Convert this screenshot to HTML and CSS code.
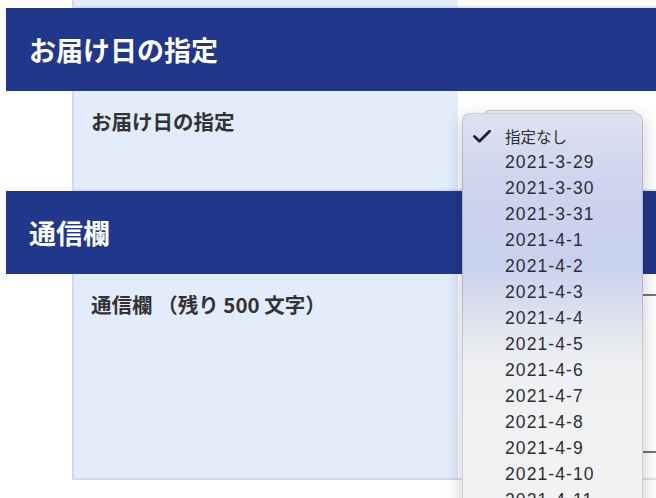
FILE: index.html
```html
<html>
<head>
  <title>お届け日の指定</title>
  <link rel="stylesheet" href="styles.css">
</head>
<body>
  <div class="order-form">
    <div class="form-row prev-row">
      <div class="label-cell"></div>
      <div class="field-cell"></div>
    </div>

    <h2 class="section-head">お届け日の指定</h2>
    <div class="form-row date-row">
      <div class="label-cell">お届け日の指定</div>
      <div class="field-cell">
        <div class="select-box"></div>
      </div>
    </div>

    <h2 class="section-head">通信欄</h2>
    <div class="form-row memo-row">
      <div class="label-cell">通信欄 （残り 500 文字）</div>
      <div class="field-cell">
        <div class="memo-box"></div>
      </div>
    </div>
  </div>

  <!-- 開いているセレクトのポップアップ -->
  <ul class="date-popup">
    <li class="selected">
      <svg class="check" width="18" height="13" viewBox="0 0 18 13">
        <path d="M1.5 6.5 L6.5 11.2 L16.5 1.2" fill="none" stroke="#1f2130" stroke-width="2.8" stroke-linecap="round" stroke-linejoin="round"/>
      </svg>
      <span class="jp">指定なし</span>
    </li>
    <li>2021-3-29</li>
    <li>2021-3-30</li>
    <li>2021-3-31</li>
    <li>2021-4-1</li>
    <li>2021-4-2</li>
    <li>2021-4-3</li>
    <li>2021-4-4</li>
    <li>2021-4-5</li>
    <li>2021-4-6</li>
    <li>2021-4-7</li>
    <li>2021-4-8</li>
    <li>2021-4-9</li>
    <li>2021-4-10</li>
    <li>2021-4-11</li>
  </ul>
</body>
</html>
```
FILE: styles.css
```css
html, body {
  margin: 0;
  height: 100%;
  background: #fff;
  overflow: hidden;
  font-family: "Noto Sans CJK JP", "Liberation Sans", sans-serif;
}

.order-form {
  width: 100%;
}

.form-row {
  display: grid;
  grid-template-columns: 386px 1fr;
  margin-left: 72px;
}

.label-cell {
  background-color: #e3ecfb;
  border-left: 2px solid #cfdaea;
  border-bottom: 2px solid #cfdaea;
  padding: 15px 0 0 17px;
  font-size: 20.5px;
  font-weight: bold;
  line-height: 30px;
  color: #333;
}

.field-cell {
  border-bottom: 2px solid #dfe5ee;
  padding: 19px 0 0 26px;
}

.prev-row {
  height: 8px;
}

.prev-row .label-cell,
.prev-row .field-cell {
  padding: 0;
}

.date-row {
  height: 100px;
}

.memo-row {
  height: 206px;
}

.section-head {
  margin: 0 0 0 6px;
  height: 83px;
  background-color: #21378b;
  color: #fff;
  font-size: 27px;
  font-weight: bold;
  padding-left: 23px;
  display: flex;
  align-items: center;
}

.select-box {
  width: 151px;
  height: 22px;
  border: 1px solid #c4c4c4;
  border-radius: 5px;
  background: linear-gradient(#f4f4f4, #e2e2e2);
}

.memo-box {
  height: 155px;
  margin-top: 1px;
  border: 2px solid #747474;
  border-right: none;
}

.date-popup {
  position: absolute;
  left: 462px;
  top: 113px;
  width: 179px;
  height: 420px;
  margin: 0;
  padding: 9px 0 0 0;
  list-style: none;
  border: 1px solid rgba(0, 0, 0, 0.14);
  border-radius: 8px;
  box-shadow: 0 5px 18px rgba(0, 0, 0, 0.22);
  background: linear-gradient(#dee1ef 0px, #cdd4ee 70px, #c8d1ed 150px, #dde1ee 200px, #eeeff2 250px, #f2f2f2 330px);
}

.date-popup li {
  position: relative;
  height: 26px;
  line-height: 26px;
  padding-left: 42px;
  font-family: "Liberation Sans", "Noto Sans CJK JP", sans-serif;
  font-size: 17.5px;
  letter-spacing: 1.1px;
  color: #2c2e38;
}

.date-popup .jp {
  font-family: "Noto Sans CJK JP", sans-serif;
  font-size: 15.5px;
  letter-spacing: 0;
}

.date-popup .check {
  position: absolute;
  left: 10px;
  top: 7px;
}
```
